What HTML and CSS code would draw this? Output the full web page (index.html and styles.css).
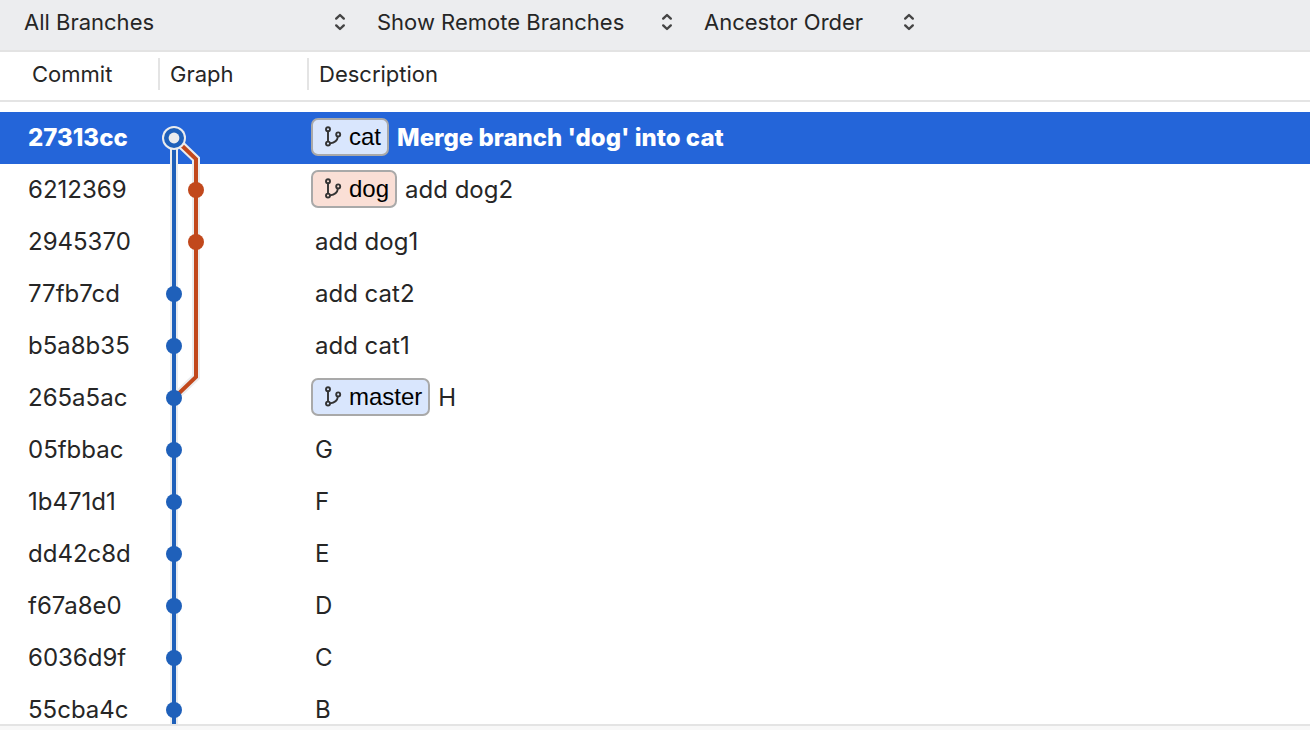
FILE: index.html
```html
<!DOCTYPE html>
<html lang="en">
<head>
<meta charset="utf-8">
<title>Commit history</title>
<link rel="stylesheet" href="styles.css">
</head>
<body>
<svg class="defs" aria-hidden="true">
  <symbol id="updown" viewBox="0 0 12 18">
    <path d="M2.2 5.6 L6 2 L9.8 5.6 M2.2 12.4 L6 16 L9.8 12.4"/>
  </symbol>
  <symbol id="branch" viewBox="0 0 18 22">
    <circle cx="4" cy="3.2" r="2"/><circle cx="4" cy="17.6" r="2"/><circle cx="14.2" cy="8.4" r="2"/>
    <path d="M4 5.2 V15.6 M6 17.4 C10.5 17 13.4 14.4 14 10.4"/>
  </symbol>
  <symbol id="trunk" viewBox="0 0 60 52">
    <path class="halo" d="M16 0 V52"/><path class="blue" d="M16 0 V52"/>
  </symbol>
  <symbol id="commit" viewBox="0 0 60 52">
    <use href="#trunk"/><circle class="blue-dot" cx="16" cy="26" r="8"/>
  </symbol>
  <symbol id="side" viewBox="0 0 60 52">
    <use href="#trunk"/>
    <path class="halo" d="M38 0 V52"/><path class="red" d="M38 0 V52"/>
  </symbol>
</svg>
<form class="toolbar">
  <div class="picker picker-wide">
    <select class="picker-select" aria-label="Branches"><option>All Branches</option></select>
    <svg class="picker-icon"><use href="#updown"/></svg>
  </div>
  <div class="picker picker-medium">
    <select class="picker-select" aria-label="Remote branches"><option>Show Remote Branches</option></select>
    <svg class="picker-icon"><use href="#updown"/></svg>
  </div>
  <div class="picker picker-narrow">
    <select class="picker-select" aria-label="Sort order"><option>Ancestor Order</option></select>
    <svg class="picker-icon"><use href="#updown"/></svg>
  </div>
</form>
<main class="history">
  <table class="log">
    <colgroup><col class="col-commit"><col class="col-graph"><col></colgroup>
    <thead>
      <tr><th scope="col"><div class="head head-first">Commit</div></th><th scope="col"><div class="head">Graph</div></th><th scope="col"><div class="head">Description</div></th></tr>
    </thead>
    <tbody>
      <tr class="selected">
        <td class="hash">27313cc</td>
        <td><svg class="graph" viewBox="0 0 60 52">
          <path class="halo" d="M16 26 V52 M17 27 L38 47 V52"/>
          <path class="red" d="M17 27 L38 47 V52"/><path class="blue" d="M16 26 V52"/>
          <circle class="light-dot" cx="16" cy="26" r="12"/><circle class="blue-dot" cx="16" cy="26" r="10"/><circle class="light-dot" cx="16" cy="26" r="5.4"/>
        </svg></td>
        <td><div class="message"><span class="badge"><svg class="badge-icon"><use href="#branch"/></svg>cat</span>Merge branch 'dog' into cat</div></td>
      </tr>
      <tr>
        <td class="hash">6212369</td>
        <td><svg class="graph" viewBox="0 0 60 52"><use href="#side"/><circle class="red-dot" cx="38" cy="26" r="8"/></svg></td>
        <td><div class="message"><span class="badge badge-other"><svg class="badge-icon"><use href="#branch"/></svg>dog</span>add dog2</div></td>
      </tr>
      <tr>
        <td class="hash">2945370</td>
        <td><svg class="graph" viewBox="0 0 60 52"><use href="#side"/><circle class="red-dot" cx="38" cy="26" r="8"/></svg></td>
        <td><div class="message plain">add dog1</div></td>
      </tr>
      <tr>
        <td class="hash">77fb7cd</td>
        <td><svg class="graph" viewBox="0 0 60 52"><use href="#side"/><circle class="blue-dot" cx="16" cy="26" r="8"/></svg></td>
        <td><div class="message plain">add cat2</div></td>
      </tr>
      <tr>
        <td class="hash">b5a8b35</td>
        <td><svg class="graph" viewBox="0 0 60 52"><use href="#side"/><circle class="blue-dot" cx="16" cy="26" r="8"/></svg></td>
        <td><div class="message plain">add cat1</div></td>
      </tr>
      <tr>
        <td class="hash">265a5ac</td>
        <td><svg class="graph" viewBox="0 0 60 52">
          <path class="halo" d="M38 0 V5 L16 26"/><path class="red" d="M38 0 V5 L16 26"/>
          <use href="#commit"/>
        </svg></td>
        <td><div class="message"><span class="badge"><svg class="badge-icon"><use href="#branch"/></svg>master</span>H</div></td>
      </tr>
      <tr><td class="hash">05fbbac</td><td><svg class="graph"><use href="#commit"/></svg></td><td><div class="message plain">G</div></td></tr>
      <tr><td class="hash">1b471d1</td><td><svg class="graph"><use href="#commit"/></svg></td><td><div class="message plain">F</div></td></tr>
      <tr><td class="hash">dd42c8d</td><td><svg class="graph"><use href="#commit"/></svg></td><td><div class="message plain">E</div></td></tr>
      <tr><td class="hash">f67a8e0</td><td><svg class="graph"><use href="#commit"/></svg></td><td><div class="message plain">D</div></td></tr>
      <tr><td class="hash">6036d9f</td><td><svg class="graph"><use href="#commit"/></svg></td><td><div class="message plain">C</div></td></tr>
      <tr><td class="hash">55cba4c</td><td><svg class="graph"><use href="#commit"/></svg></td><td><div class="message plain">B</div></td></tr>
    </tbody>
  </table>
</main>
<footer class="pane-edge"></footer>
</body>
</html>
```
FILE: styles.css
```css
* { box-sizing: border-box; }

body {
  margin: 0;
  height: 100vh;
  display: flex;
  flex-direction: column;
  overflow: hidden;
  background: #fff;
  color: #262626;
  font-family: Inter, "Liberation Sans", sans-serif;
  font-size: 24px;
}

.defs { position: absolute; width: 0; height: 0; }

.toolbar {
  flex: none;
  display: flex;
  gap: 30px;
  height: 52px;
  padding: 6px 24px 12px;
  background: #ecedef;
  border-bottom: 2px solid #e3e3e3;
}

.picker { position: relative; }
.picker-wide { width: 323px; }
.picker-medium { width: 297px; }
.picker-narrow { width: 212px; }

.picker-select {
  appearance: none;
  width: 100%;
  height: 32px;
  padding: 0;
  border: 0;
  background: transparent;
  color: inherit;
  font-family: inherit;
  font-size: 22px;
}

.picker-icon {
  position: absolute;
  right: 1px;
  top: 7px;
  width: 12px;
  height: 18px;
  pointer-events: none;
}

#updown path {
  fill: none;
  stroke: #444;
  stroke-width: 2.4;
  stroke-linecap: round;
  stroke-linejoin: round;
}

.history { flex: 1; min-height: 0; overflow: hidden; }

.log {
  width: 100%;
  table-layout: fixed;
  border-collapse: separate;
  border-spacing: 0;
}
.col-commit { width: 158px; }
.col-graph { width: 149px; }

th {
  height: 50px;
  padding: 0;
  border-bottom: 2px solid #e4e4e4;
  font-size: 22px;
  font-weight: 400;
  text-align: left;
}
.head {
  height: 32px;
  margin-bottom: 4px;
  padding-left: 10px;
  border-left: 2px solid #e4e4e4;
  line-height: 32px;
}
.head-first { padding-left: 32px; border-left: 0; }

tbody::before { content: ""; display: block; height: 10px; }

td { height: 52px; padding: 0; white-space: nowrap; }
.hash { padding: 0 0 2px 28px; }

.selected { background: #2465d9; color: #fff; font-weight: 800; }

.graph { display: block; width: 60px; height: 52px; }
.halo, .blue, .red { fill: none; stroke-width: 4; }
.halo { stroke: #ebecee; stroke-width: 8; }
.blue { stroke: #1f60ba; }
.red { stroke: #c1481c; }
.blue-dot { fill: #1f60ba; }
.red-dot { fill: #c1481c; }
.light-dot { fill: #ebecee; }

.message {
  display: flex;
  align-items: center;
  gap: 8px;
  padding: 0 0 2px 4px;
}
.plain { padding-left: 8px; }

.badge {
  display: flex;
  align-items: center;
  gap: 7px;
  height: 38px;
  padding: 0 6px 0 11px;
  border: 2px solid #a9a9a9;
  border-radius: 7px;
  background: #d9e6fd;
  color: #000;
  font-family: "Liberation Sans", sans-serif;
  font-size: 24px;
  font-weight: 400;
}
.badge-other { background: #fadfd6; }

.badge-icon { width: 18px; height: 22px; }
#branch circle, #branch path { fill: none; stroke: #333; stroke-width: 1.9; }

.pane-edge {
  flex: none;
  height: 6px;
  background: #f8f8f8;
  border-top: 2px solid #e4e4e4;
}
```
